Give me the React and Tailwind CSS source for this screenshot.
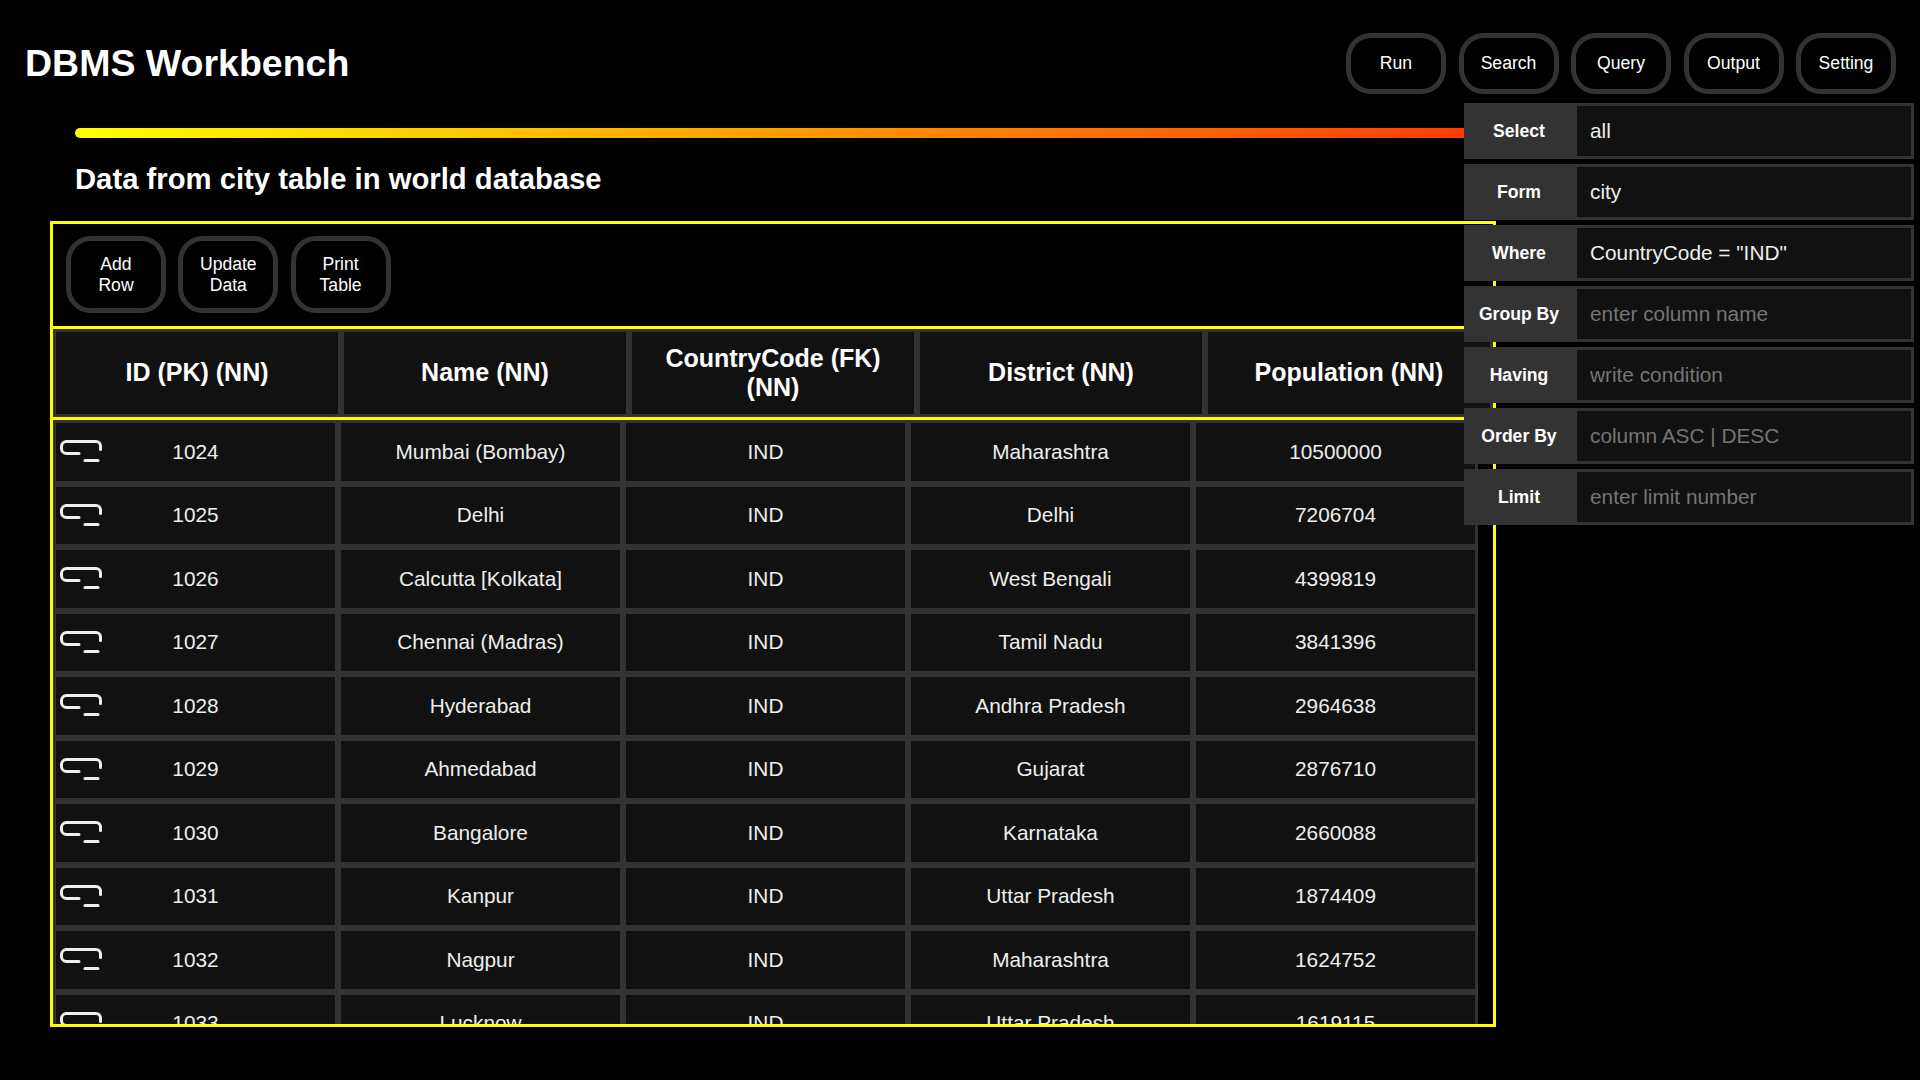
const navItems = ['Run', 'Search', 'Query', 'Output', 'Setting'];
const tableActions = [['Add', 'Row'], ['Update', 'Data'], ['Print', 'Table']];
const columns = ['ID (PK) (NN)', 'Name (NN)', 'CountryCode (FK) (NN)', 'District (NN)', 'Population (NN)'];
const rows = [
  [1024, 'Mumbai (Bombay)', 'IND', 'Maharashtra', 10500000],
  [1025, 'Delhi', 'IND', 'Delhi', 7206704],
  [1026, 'Calcutta [Kolkata]', 'IND', 'West Bengali', 4399819],
  [1027, 'Chennai (Madras)', 'IND', 'Tamil Nadu', 3841396],
  [1028, 'Hyderabad', 'IND', 'Andhra Pradesh', 2964638],
  [1029, 'Ahmedabad', 'IND', 'Gujarat', 2876710],
  [1030, 'Bangalore', 'IND', 'Karnataka', 2660088],
  [1031, 'Kanpur', 'IND', 'Uttar Pradesh', 1874409],
  [1032, 'Nagpur', 'IND', 'Maharashtra', 1624752],
  [1033, 'Lucknow', 'IND', 'Uttar Pradesh', 1619115],
];
const clauses = [
  { label: 'Select', value: 'all' },
  { label: 'Form', value: 'city' },
  { label: 'Where', value: 'CountryCode = "IND"' },
  { label: 'Group By', placeholder: 'enter column name' },
  { label: 'Having', placeholder: 'write condition' },
  { label: 'Order By', placeholder: 'column ASC | DESC' },
  { label: 'Limit', placeholder: 'enter limit number' },
];

function RowIcon() {
  return (
    <svg className="absolute left-[4px] top-[17px]" width="42" height="23" viewBox="0 0 42 23" fill="none" stroke="#eeeeee" strokeWidth="3" strokeLinecap="round">
      <path d="M19 13.5H6.5A5 5 0 0 1 1.5 8.5V6.5A5 5 0 0 1 6.5 1.5H36A4.5 4.5 0 0 1 40.5 6V9.5" />
      <path d="M25 20.5H38" />
    </svg>
  );
}

function PillButton({ children, tall }) {
  return (
    <button className={`w-[100px] border-[5px] border-[#333333] bg-black text-white text-[17.6px] leading-[21px] ${tall ? 'h-[77px] rounded-[25px]' : 'h-[61px] rounded-[25px]'}`}>
      {children}
    </button>
  );
}

export default function App() {
  return (
    <div className="relative w-screen h-screen overflow-hidden bg-black text-white font-['Liberation_Sans',Arial,sans-serif]">
      <header className="flex items-center justify-between pt-[33px] pl-[25px] pr-[24px]">
        <h1 className="text-[37.5px] font-bold leading-[61px]">DBMS Workbench</h1>
        <nav className="flex gap-[12.5px]">
          {navItems.map((item) => <PillButton key={item}>{item}</PillButton>)}
        </nav>
      </header>

      <div className="ml-[75px] mt-[34px] h-[10px] w-[1830px] rounded-full bg-[linear-gradient(to_right,#ffff00,#ff0000)]" />
      <h2 className="ml-[75px] mt-[25px] text-[29.25px] font-bold leading-[32px]">Data from city table in world database</h2>

      <section className="ml-[50px] mt-[26px] w-[1446px] h-[806px] border-[3px] border-[#ffff00] flex flex-col overflow-hidden">
        <div className="flex gap-[12.3px] px-[13px] pt-3 h-[102px] shrink-0">
          {tableActions.map(([a, b]) => (
            <PillButton key={a} tall>{a}<br />{b}</PillButton>
          ))}
        </div>
        <div className="border-y-[3px] border-[#ffff00] shrink-0 h-[94px]">
          <table className="table-fixed w-[1440px] border-separate border-spacing-0">
            <thead>
              <tr>
                {columns.map((col) => (
                  <th key={col} className="h-[88px] border-[3px] border-[#333333] bg-[#111111] px-4 pb-[1px] text-[25px] leading-[29px] font-bold text-white">{col}</th>
                ))}
              </tr>
            </thead>
          </table>
        </div>
        <div className="flex-1 overflow-hidden">
          <table className="table-fixed w-[1425px] border-separate border-spacing-0">
            <tbody>
              {rows.map((row) => (
                <tr key={row[0]}>
                  {row.map((cell, i) => (
                    <td key={i} className="relative h-[63.5px] border-[3px] border-[#333333] bg-[#111111] pb-[1px] text-center text-[20.8px] text-[#eeeeee]">
                      {i === 0 && <RowIcon />}
                      {cell}
                    </td>
                  ))}
                </tr>
              ))}
            </tbody>
          </table>
        </div>
      </section>

      <aside className="absolute left-[1464px] top-[103px] w-[450px] flex flex-col gap-[5px]">
        {clauses.map((c) => (
          <div key={c.label} className="flex h-[56px]">
            <label className="w-[110px] shrink-0 flex items-center justify-center bg-[#333333] text-[17.6px] font-bold text-white">{c.label}</label>
            <input
              readOnly
              value={c.value}
              placeholder={c.placeholder}
              className="flex-1 min-w-0 border-[3px] border-[#333333] bg-[#111111] px-[13px] text-[20.8px] text-[#eeeeee] placeholder:text-[#757575] outline-none"
            />
          </div>
        ))}
      </aside>
    </div>
  );
}
